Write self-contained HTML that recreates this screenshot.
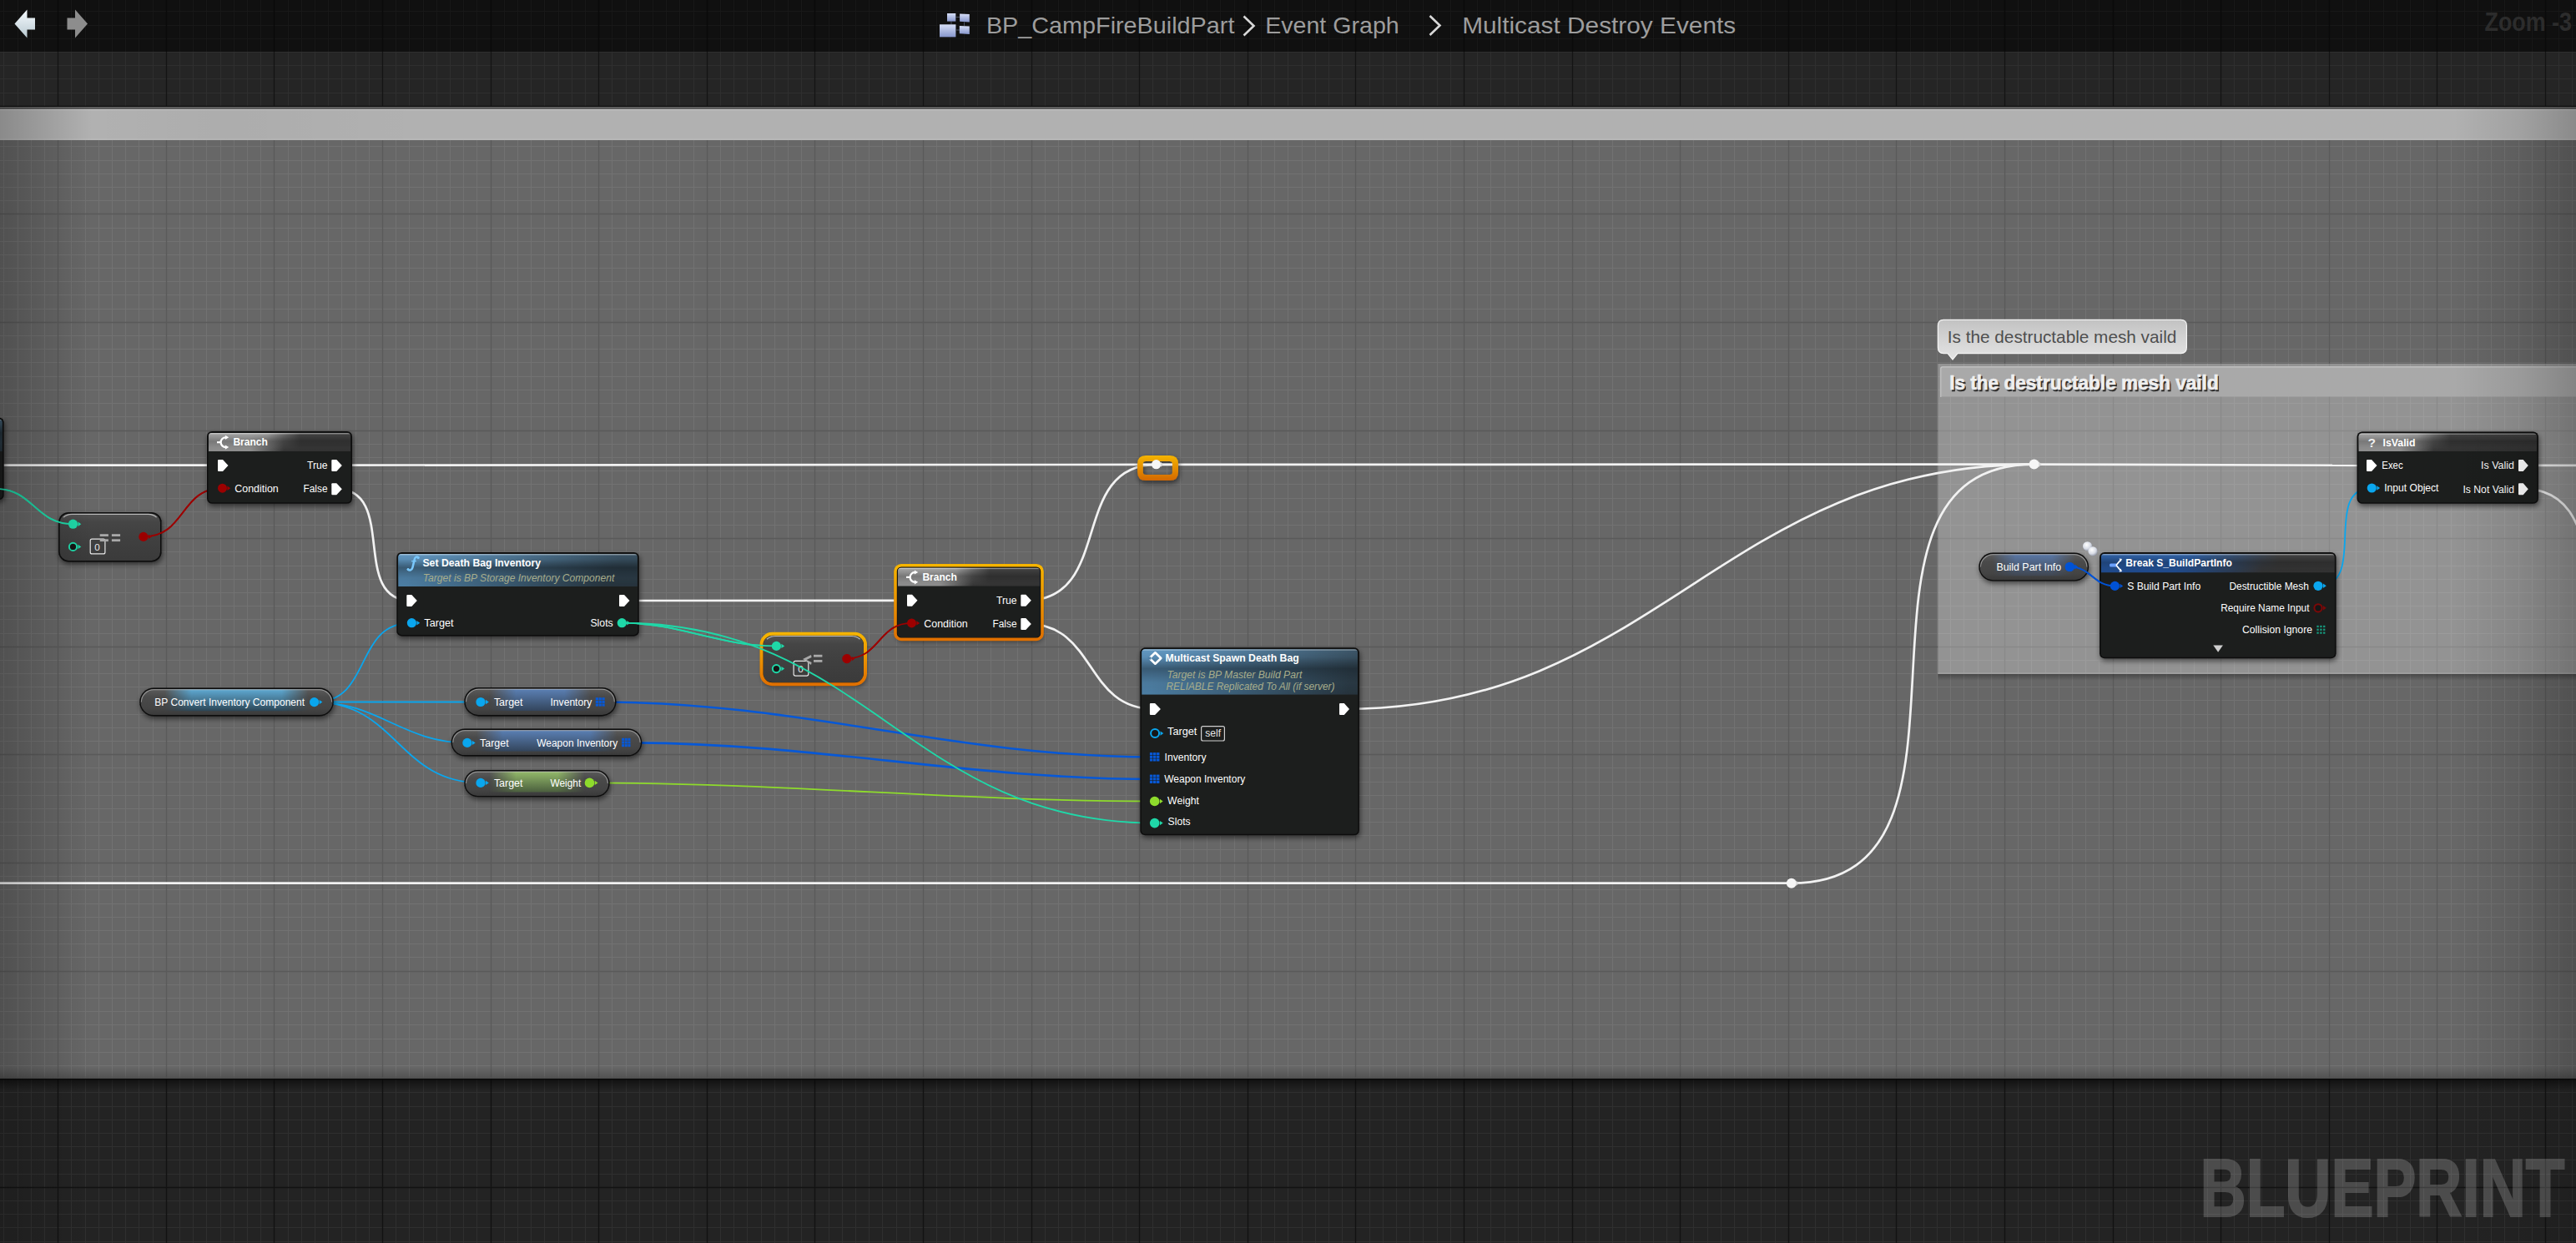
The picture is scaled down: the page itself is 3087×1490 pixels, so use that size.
<!DOCTYPE html>
<html><head><meta charset="utf-8"><title>Blueprint</title>
<style>html,body{margin:0;padding:0;background:#101010;overflow:hidden;width:3087px;height:1490px}svg{display:block}text{font-family:"Liberation Sans",sans-serif}</style>
</head><body><svg width="3087" height="1490" viewBox="0 0 3087 1490" font-family='"Liberation Sans", sans-serif'><defs><linearGradient id="barL" x1="0" y1="0" x2="1" y2="0"><stop offset="0" stop-color="#000" stop-opacity="0.0"/><stop offset="0.4" stop-color="#000" stop-opacity="0.025"/><stop offset="1" stop-color="#000" stop-opacity="0"/></linearGradient><linearGradient id="shTop" x1="0" y1="0" x2="0" y2="1"><stop offset="0" stop-color="#000" stop-opacity="0.55"/><stop offset="1" stop-color="#000" stop-opacity="0"/></linearGradient><linearGradient id="shBot" x1="0" y1="1" x2="0" y2="0"><stop offset="0" stop-color="#000" stop-opacity="0.35"/><stop offset="1" stop-color="#000" stop-opacity="0"/></linearGradient><linearGradient id="cmtHdr" x1="0" y1="0" x2="1" y2="0"><stop offset="0" stop-color="#a9a9a9"/><stop offset="1" stop-color="#a3a3a3"/></linearGradient><linearGradient id="bub" x1="0" y1="0" x2="0" y2="1"><stop offset="0" stop-color="#c2c2c2"/><stop offset="0.5" stop-color="#d4d4d4"/><stop offset="1" stop-color="#e4e4e4"/></linearGradient><linearGradient id="vigL" x1="0" y1="0" x2="1" y2="0"><stop offset="0" stop-color="#000" stop-opacity="0.22"/><stop offset="1" stop-color="#000" stop-opacity="0"/></linearGradient><linearGradient id="vigR" x1="1" y1="0" x2="0" y2="0"><stop offset="0" stop-color="#000" stop-opacity="0.22"/><stop offset="0.45" stop-color="#000" stop-opacity="0.09"/><stop offset="1" stop-color="#000" stop-opacity="0"/></linearGradient><filter id="nshadow" x="-10%" y="-20%" width="125%" height="150%"><feGaussianBlur in="SourceAlpha" stdDeviation="3"/><feOffset dx="1" dy="3"/><feComponentTransfer><feFuncA type="linear" slope="0.55"/></feComponentTransfer><feMerge><feMergeNode/><feMergeNode in="SourceGraphic"/></feMerge></filter><linearGradient id="hdrGray" x1="0" y1="0" x2="1" y2="0.25"><stop offset="0" stop-color="#9c9c9c"/><stop offset="0.28" stop-color="#8a8a8a"/><stop offset="0.52" stop-color="#404040"/><stop offset="1" stop-color="#2f2f2f"/></linearGradient><linearGradient id="hdrShade" x1="0" y1="0" x2="0" y2="1"><stop offset="0" stop-color="#fff" stop-opacity="0.18"/><stop offset="0.5" stop-color="#fff" stop-opacity="0"/><stop offset="1" stop-color="#000" stop-opacity="0.15"/></linearGradient><linearGradient id="hdrBlue" x1="0" y1="0" x2="1" y2="0.35"><stop offset="0" stop-color="#5a8db6"/><stop offset="0.45" stop-color="#40667f"/><stop offset="1" stop-color="#1f2a33"/></linearGradient><linearGradient id="hdrBlueV" x1="0" y1="0" x2="0" y2="1"><stop offset="0" stop-color="#000" stop-opacity="0"/><stop offset="0.55" stop-color="#000" stop-opacity="0.28"/><stop offset="1" stop-color="#000" stop-opacity="0"/></linearGradient><linearGradient id="hdrStruct" x1="0" y1="0" x2="1" y2="0.2"><stop offset="0" stop-color="#3565a8"/><stop offset="0.5" stop-color="#23497e"/><stop offset="1" stop-color="#2c3646"/></linearGradient><linearGradient id="selG" x1="0" y1="0" x2="0" y2="1"><stop offset="0" stop-color="#f6b400"/><stop offset="1" stop-color="#e07000"/></linearGradient><linearGradient id="hdrBand" x1="0" y1="0" x2="0" y2="1"><stop offset="0" stop-color="#000" stop-opacity="0"/><stop offset="0.22" stop-color="#000" stop-opacity="0.05"/><stop offset="0.5" stop-color="#000" stop-opacity="0.22"/><stop offset="0.8" stop-color="#000" stop-opacity="0.06"/><stop offset="1" stop-color="#000" stop-opacity="0"/></linearGradient><linearGradient id="hdrBandB" x1="0" y1="0" x2="0" y2="1"><stop offset="0" stop-color="#000" stop-opacity="0"/><stop offset="0.2" stop-color="#000" stop-opacity="0.05"/><stop offset="0.45" stop-color="#000" stop-opacity="0.36"/><stop offset="0.75" stop-color="#000" stop-opacity="0.08"/><stop offset="1" stop-color="#000" stop-opacity="0"/></linearGradient><linearGradient id="bodyG" x1="0" y1="0" x2="0" y2="1"><stop offset="0" stop-color="#1d1f1e"/><stop offset="1" stop-color="#202221"/></linearGradient><clipPath id="hc60_-120"><rect x="-118.0" y="502.5" width="120.7" height="38.7" rx="4"/><rect x="-118.0" y="506.5" width="120.7" height="34.7"/></clipPath><linearGradient id="hgT60_-120" gradientUnits="userSpaceOnUse" x1="-90.0" y1="0" x2="14.7" y2="0"><stop offset="0" stop-color="#649ac4"/><stop offset="1" stop-color="#3d5668"/></linearGradient><linearGradient id="hgB60_-120" gradientUnits="userSpaceOnUse" x1="-110.0" y1="0" x2="-5.3" y2="0"><stop offset="0" stop-color="#4b7da2"/><stop offset="1" stop-color="#26333c"/></linearGradient><linearGradient id="hm60_-120" x1="0" y1="0" x2="0" y2="1"><stop offset="0" stop-color="#fff"/><stop offset="0.5" stop-color="#fff" stop-opacity="0.5"/><stop offset="1" stop-color="#fff" stop-opacity="0"/></linearGradient><mask id="hm60_-120m" maskUnits="userSpaceOnUse" x="-120" y="500.5" width="124.7" height="40.700000000000045"><rect x="-120" y="500.5" width="124.7" height="40.700000000000045" fill="url(#hm60_-120)"/></mask><linearGradient id="cmpG" x1="0" y1="0" x2="0" y2="1"><stop offset="0" stop-color="#555"/><stop offset="0.18" stop-color="#474747"/><stop offset="0.5" stop-color="#424242"/><stop offset="1" stop-color="#3c3c3c"/></linearGradient><clipPath id="hc65_248"><rect x="250.0" y="519.1" width="170.0" height="21.9" rx="4"/><rect x="250.0" y="523.1" width="170.0" height="17.9"/></clipPath><linearGradient id="hgT65_248" gradientUnits="userSpaceOnUse" x1="320.0" y1="0" x2="360.0" y2="0"><stop offset="0" stop-color="#a6a6a6"/><stop offset="1" stop-color="#444444"/></linearGradient><linearGradient id="hgB65_248" gradientUnits="userSpaceOnUse" x1="300.0" y1="0" x2="340.0" y2="0"><stop offset="0" stop-color="#8e8e8e"/><stop offset="1" stop-color="#343434"/></linearGradient><linearGradient id="hm65_248" x1="0" y1="0" x2="0" y2="1"><stop offset="0" stop-color="#fff"/><stop offset="0.5" stop-color="#fff" stop-opacity="0.5"/><stop offset="1" stop-color="#fff" stop-opacity="0"/></linearGradient><mask id="hm65_248m" maskUnits="userSpaceOnUse" x="248" y="517.1" width="174" height="23.899999999999977"><rect x="248" y="517.1" width="174" height="23.899999999999977" fill="url(#hm65_248)"/></mask><clipPath id="hc66_475"><rect x="477.3" y="664.1" width="286.5" height="39.0" rx="4"/><rect x="477.3" y="668.1" width="286.5" height="35.0"/></clipPath><linearGradient id="hgT66_475" gradientUnits="userSpaceOnUse" x1="505.3" y1="0" x2="745.3" y2="0"><stop offset="0" stop-color="#649ac4"/><stop offset="1" stop-color="#3d5668"/></linearGradient><linearGradient id="hgB66_475" gradientUnits="userSpaceOnUse" x1="485.3" y1="0" x2="725.3" y2="0"><stop offset="0" stop-color="#4b7da2"/><stop offset="1" stop-color="#26333c"/></linearGradient><linearGradient id="hm66_475" x1="0" y1="0" x2="0" y2="1"><stop offset="0" stop-color="#fff"/><stop offset="0.5" stop-color="#fff" stop-opacity="0.5"/><stop offset="1" stop-color="#fff" stop-opacity="0"/></linearGradient><mask id="hm66_475m" maskUnits="userSpaceOnUse" x="475.3" y="662.1" width="290.49999999999994" height="41.0"><rect x="475.3" y="662.1" width="290.49999999999994" height="41.0" fill="url(#hm66_475)"/></mask><clipPath id="hc76_1074"><rect x="1076.0" y="680.8" width="170.0" height="21.9" rx="4"/><rect x="1076.0" y="684.8" width="170.0" height="17.9"/></clipPath><linearGradient id="hgT76_1074" gradientUnits="userSpaceOnUse" x1="1146.0" y1="0" x2="1186.0" y2="0"><stop offset="0" stop-color="#a6a6a6"/><stop offset="1" stop-color="#444444"/></linearGradient><linearGradient id="hgB76_1074" gradientUnits="userSpaceOnUse" x1="1126.0" y1="0" x2="1166.0" y2="0"><stop offset="0" stop-color="#8e8e8e"/><stop offset="1" stop-color="#343434"/></linearGradient><linearGradient id="hm76_1074" x1="0" y1="0" x2="0" y2="1"><stop offset="0" stop-color="#fff"/><stop offset="0.5" stop-color="#fff" stop-opacity="0.5"/><stop offset="1" stop-color="#fff" stop-opacity="0"/></linearGradient><mask id="hm76_1074m" maskUnits="userSpaceOnUse" x="1074" y="678.8" width="174" height="23.90000000000009"><rect x="1074" y="678.8" width="174" height="23.90000000000009" fill="url(#hm76_1074)"/></mask><clipPath id="hc82_1366"><rect x="1368.3" y="778.3" width="258.6" height="54.5" rx="4"/><rect x="1368.3" y="782.3" width="258.6" height="50.5"/></clipPath><linearGradient id="hgT82_1366" gradientUnits="userSpaceOnUse" x1="1396.3" y1="0" x2="1636.3" y2="0"><stop offset="0" stop-color="#649ac4"/><stop offset="1" stop-color="#3d5668"/></linearGradient><linearGradient id="hgB82_1366" gradientUnits="userSpaceOnUse" x1="1376.3" y1="0" x2="1616.3" y2="0"><stop offset="0" stop-color="#4b7da2"/><stop offset="1" stop-color="#26333c"/></linearGradient><linearGradient id="hm82_1366" x1="0" y1="0" x2="0" y2="1"><stop offset="0" stop-color="#fff"/><stop offset="0.5" stop-color="#fff" stop-opacity="0.5"/><stop offset="1" stop-color="#fff" stop-opacity="0"/></linearGradient><mask id="hm82_1366m" maskUnits="userSpaceOnUse" x="1366.3" y="776.3" width="262.60000000000014" height="56.5"><rect x="1366.3" y="776.3" width="262.60000000000014" height="56.5" fill="url(#hm82_1366)"/></mask><linearGradient id="pg102_167v" x1="0" y1="0" x2="0" y2="1"><stop offset="0" stop-color="#5fa9d2"/><stop offset="1" stop-color="#2c4656"/></linearGradient><linearGradient id="pg102_167h" x1="0" y1="0" x2="1" y2="0"><stop offset="0" stop-color="#fff" stop-opacity="0"/><stop offset="0.129" stop-color="#fff" stop-opacity="0"/><stop offset="0.267" stop-color="#fff" stop-opacity="1"/><stop offset="0.733" stop-color="#fff" stop-opacity="1"/><stop offset="0.871" stop-color="#fff" stop-opacity="0"/><stop offset="1" stop-color="#fff" stop-opacity="0"/></linearGradient><mask id="pg102_167m" maskUnits="userSpaceOnUse" x="167.2" y="824.5" width="232.60000000000002" height="34.0"><rect x="167.2" y="824.5" width="232.60000000000002" height="34.0" fill="url(#pg102_167h)"/></mask><linearGradient id="pillBase" x1="0" y1="0" x2="0" y2="1"><stop offset="0" stop-color="#5c5c5c"/><stop offset="0.3" stop-color="#4a4a4a"/><stop offset="0.75" stop-color="#444"/><stop offset="1" stop-color="#3a3a3a"/></linearGradient><linearGradient id="pg105_556v" x1="0" y1="0" x2="0" y2="1"><stop offset="0" stop-color="#5b80b4"/><stop offset="1" stop-color="#33455c"/></linearGradient><linearGradient id="pg105_556h" x1="0" y1="0" x2="1" y2="0"><stop offset="0" stop-color="#fff" stop-opacity="0"/><stop offset="0.165" stop-color="#fff" stop-opacity="0"/><stop offset="0.340" stop-color="#fff" stop-opacity="1"/><stop offset="0.660" stop-color="#fff" stop-opacity="1"/><stop offset="0.835" stop-color="#fff" stop-opacity="0"/><stop offset="1" stop-color="#fff" stop-opacity="0"/></linearGradient><mask id="pg105_556m" maskUnits="userSpaceOnUse" x="556.3" y="824.0" width="182.20000000000005" height="34.39999999999998"><rect x="556.3" y="824.0" width="182.20000000000005" height="34.39999999999998" fill="url(#pg105_556h)"/></mask><linearGradient id="pg110_540v" x1="0" y1="0" x2="0" y2="1"><stop offset="0" stop-color="#5b80b4"/><stop offset="1" stop-color="#33455c"/></linearGradient><linearGradient id="pg110_540h" x1="0" y1="0" x2="1" y2="0"><stop offset="0" stop-color="#fff" stop-opacity="0"/><stop offset="0.131" stop-color="#fff" stop-opacity="0"/><stop offset="0.271" stop-color="#fff" stop-opacity="1"/><stop offset="0.729" stop-color="#fff" stop-opacity="1"/><stop offset="0.869" stop-color="#fff" stop-opacity="0"/><stop offset="1" stop-color="#fff" stop-opacity="0"/></linearGradient><mask id="pg110_540m" maskUnits="userSpaceOnUse" x="540.6" y="873.5" width="228.69999999999993" height="33.0"><rect x="540.6" y="873.5" width="228.69999999999993" height="33.0" fill="url(#pg110_540h)"/></mask><linearGradient id="pg115_556v" x1="0" y1="0" x2="0" y2="1"><stop offset="0" stop-color="#93b96a"/><stop offset="1" stop-color="#4b5f3e"/></linearGradient><linearGradient id="pg115_556h" x1="0" y1="0" x2="1" y2="0"><stop offset="0" stop-color="#fff" stop-opacity="0"/><stop offset="0.172" stop-color="#fff" stop-opacity="0"/><stop offset="0.356" stop-color="#fff" stop-opacity="1"/><stop offset="0.644" stop-color="#fff" stop-opacity="1"/><stop offset="0.828" stop-color="#fff" stop-opacity="0"/><stop offset="1" stop-color="#fff" stop-opacity="0"/></linearGradient><mask id="pg115_556m" maskUnits="userSpaceOnUse" x="556.3" y="923.0" width="174.30000000000007" height="32.299999999999955"><rect x="556.3" y="923.0" width="174.30000000000007" height="32.299999999999955" fill="url(#pg115_556h)"/></mask><linearGradient id="selK" x1="0" y1="0" x2="0" y2="1"><stop offset="0" stop-color="#f4b400"/><stop offset="1" stop-color="#d46800"/></linearGradient><linearGradient id="pg126_2371v" x1="0" y1="0" x2="0" y2="1"><stop offset="0" stop-color="#5a78a6"/><stop offset="1" stop-color="#404650"/></linearGradient><linearGradient id="pg126_2371h" x1="0" y1="0" x2="1" y2="0"><stop offset="0" stop-color="#fff" stop-opacity="0"/><stop offset="0.121" stop-color="#fff" stop-opacity="0"/><stop offset="0.334" stop-color="#fff" stop-opacity="1"/><stop offset="0.666" stop-color="#fff" stop-opacity="1"/><stop offset="0.879" stop-color="#fff" stop-opacity="0"/><stop offset="1" stop-color="#fff" stop-opacity="0"/></linearGradient><mask id="pg126_2371m" maskUnits="userSpaceOnUse" x="2371.3" y="662.5" width="131.79999999999973" height="34.10000000000002"><rect x="2371.3" y="662.5" width="131.79999999999973" height="34.10000000000002" fill="url(#pg126_2371h)"/></mask><radialGradient id="sph" cx="0.4" cy="0.35" r="0.7"><stop offset="0" stop-color="#ffffff"/><stop offset="0.6" stop-color="#d8dce6"/><stop offset="1" stop-color="#8a90a0"/></radialGradient><clipPath id="hc130_2516"><rect x="2518.0" y="664.1" width="279.5" height="22.4" rx="4"/><rect x="2518.0" y="668.1" width="279.5" height="18.4"/></clipPath><linearGradient id="hgT130_2516" gradientUnits="userSpaceOnUse" x1="2626.0" y1="0" x2="2731.0" y2="0"><stop offset="0" stop-color="#3366aa"/><stop offset="1" stop-color="#444444"/></linearGradient><linearGradient id="hgB130_2516" gradientUnits="userSpaceOnUse" x1="2606.0" y1="0" x2="2711.0" y2="0"><stop offset="0" stop-color="#1f4a8c"/><stop offset="1" stop-color="#323232"/></linearGradient><linearGradient id="hm130_2516" x1="0" y1="0" x2="0" y2="1"><stop offset="0" stop-color="#fff"/><stop offset="0.5" stop-color="#fff" stop-opacity="0.5"/><stop offset="1" stop-color="#fff" stop-opacity="0"/></linearGradient><mask id="hm130_2516m" maskUnits="userSpaceOnUse" x="2516.0" y="662.1" width="283.5" height="24.399999999999977"><rect x="2516.0" y="662.1" width="283.5" height="24.399999999999977" fill="url(#hm130_2516)"/></mask><clipPath id="hc144_2824"><rect x="2826.6" y="519.4" width="213.3" height="21.6" rx="4"/><rect x="2826.6" y="523.4" width="213.3" height="17.6"/></clipPath><linearGradient id="hgT144_2824" gradientUnits="userSpaceOnUse" x1="2896.6" y1="0" x2="2936.6" y2="0"><stop offset="0" stop-color="#a6a6a6"/><stop offset="1" stop-color="#444444"/></linearGradient><linearGradient id="hgB144_2824" gradientUnits="userSpaceOnUse" x1="2876.6" y1="0" x2="2916.6" y2="0"><stop offset="0" stop-color="#8e8e8e"/><stop offset="1" stop-color="#343434"/></linearGradient><linearGradient id="hm144_2824" x1="0" y1="0" x2="0" y2="1"><stop offset="0" stop-color="#fff"/><stop offset="0.5" stop-color="#fff" stop-opacity="0.5"/><stop offset="1" stop-color="#fff" stop-opacity="0"/></linearGradient><mask id="hm144_2824m" maskUnits="userSpaceOnUse" x="2824.6" y="517.4" width="217.30000000000018" height="23.600000000000023"><rect x="2824.6" y="517.4" width="217.30000000000018" height="23.600000000000023" fill="url(#hm144_2824)"/></mask><linearGradient id="arrG" x1="0" y1="0" x2="0" y2="1"><stop offset="0" stop-color="#f6fbff"/><stop offset="1" stop-color="#b8c8d0"/></linearGradient><linearGradient id="icoG" x1="0" y1="0" x2="0" y2="1"><stop offset="0" stop-color="#d6def6"/><stop offset="1" stop-color="#8796cc"/></linearGradient></defs><g id="bg"><rect x="0" y="0" width="3087" height="62" fill="#101010"/><path d="M4.50,0V62M21.50,0V62M37.50,0V62M53.50,0V62M85.50,0V62M102.50,0V62M118.50,0V62M134.50,0V62M150.50,0V62M166.50,0V62M183.50,0V62M215.50,0V62M231.50,0V62M247.50,0V62M264.50,0V62M280.50,0V62M296.50,0V62M312.50,0V62M345.50,0V62M361.50,0V62M377.50,0V62M393.50,0V62M409.50,0V62M426.50,0V62M442.50,0V62M474.50,0V62M490.50,0V62M507.50,0V62M523.50,0V62M539.50,0V62M555.50,0V62M571.50,0V62M604.50,0V62M620.50,0V62M636.50,0V62M652.50,0V62M669.50,0V62M685.50,0V62M701.50,0V62M733.50,0V62M750.50,0V62M766.50,0V62M782.50,0V62M798.50,0V62M814.50,0V62M831.50,0V62M863.50,0V62M879.50,0V62M895.50,0V62M912.50,0V62M928.50,0V62M944.50,0V62M960.50,0V62M993.50,0V62M1009.50,0V62M1025.50,0V62M1041.50,0V62M1057.50,0V62M1074.50,0V62M1090.50,0V62M1122.50,0V62M1138.50,0V62M1155.50,0V62M1171.50,0V62M1187.50,0V62M1203.50,0V62M1219.50,0V62M1252.50,0V62M1268.50,0V62M1284.50,0V62M1300.50,0V62M1317.50,0V62M1333.50,0V62M1349.50,0V62M1381.50,0V62M1398.50,0V62M1414.50,0V62M1430.50,0V62M1446.50,0V62M1462.50,0V62M1479.50,0V62M1511.50,0V62M1527.50,0V62M1543.50,0V62M1560.50,0V62M1576.50,0V62M1592.50,0V62M1608.50,0V62M1641.50,0V62M1657.50,0V62M1673.50,0V62M1689.50,0V62M1705.50,0V62M1722.50,0V62M1738.50,0V62M1770.50,0V62M1786.50,0V62M1803.50,0V62M1819.50,0V62M1835.50,0V62M1851.50,0V62M1867.50,0V62M1900.50,0V62M1916.50,0V62M1932.50,0V62M1948.50,0V62M1965.50,0V62M1981.50,0V62M1997.50,0V62M2029.50,0V62M2046.50,0V62M2062.50,0V62M2078.50,0V62M2094.50,0V62M2110.50,0V62M2127.50,0V62M2159.50,0V62M2175.50,0V62M2191.50,0V62M2208.50,0V62M2224.50,0V62M2240.50,0V62M2256.50,0V62M2289.50,0V62M2305.50,0V62M2321.50,0V62M2337.50,0V62M2353.50,0V62M2370.50,0V62M2386.50,0V62M2418.50,0V62M2434.50,0V62M2451.50,0V62M2467.50,0V62M2483.50,0V62M2499.50,0V62M2515.50,0V62M2548.50,0V62M2564.50,0V62M2580.50,0V62M2596.50,0V62M2613.50,0V62M2629.50,0V62M2645.50,0V62M2677.50,0V62M2694.50,0V62M2710.50,0V62M2726.50,0V62M2742.50,0V62M2758.50,0V62M2775.50,0V62M2807.50,0V62M2823.50,0V62M2839.50,0V62M2856.50,0V62M2872.50,0V62M2888.50,0V62M2904.50,0V62M2937.50,0V62M2953.50,0V62M2969.50,0V62M2985.50,0V62M3001.50,0V62M3018.50,0V62M3034.50,0V62M3066.50,0V62M3082.50,0V62M0,13.50H3087M0,30.50H3087M0,46.50H3087M0,62.50H3087" stroke="#181818" stroke-width="1.15" fill="none"/><path d="M69.50,0V62M199.50,0V62M328.50,0V62M458.50,0V62M588.50,0V62M717.50,0V62M847.50,0V62M976.50,0V62M1106.50,0V62M1236.50,0V62M1365.50,0V62M1495.50,0V62M1624.50,0V62M1754.50,0V62M1884.50,0V62M2013.50,0V62M2143.50,0V62M2272.50,0V62M2402.50,0V62M2532.50,0V62M2661.50,0V62M2791.50,0V62M2920.50,0V62M3050.50,0V62" stroke="#0a0a0a" stroke-width="1.3" fill="none"/><rect x="0" y="62" width="3087" height="65" fill="#252525"/><path d="M4.50,62V127M21.50,62V127M37.50,62V127M53.50,62V127M85.50,62V127M102.50,62V127M118.50,62V127M134.50,62V127M150.50,62V127M166.50,62V127M183.50,62V127M215.50,62V127M231.50,62V127M247.50,62V127M264.50,62V127M280.50,62V127M296.50,62V127M312.50,62V127M345.50,62V127M361.50,62V127M377.50,62V127M393.50,62V127M409.50,62V127M426.50,62V127M442.50,62V127M474.50,62V127M490.50,62V127M507.50,62V127M523.50,62V127M539.50,62V127M555.50,62V127M571.50,62V127M604.50,62V127M620.50,62V127M636.50,62V127M652.50,62V127M669.50,62V127M685.50,62V127M701.50,62V127M733.50,62V127M750.50,62V127M766.50,62V127M782.50,62V127M798.50,62V127M814.50,62V127M831.50,62V127M863.50,62V127M879.50,62V127M895.50,62V127M912.50,62V127M928.50,62V127M944.50,62V127M960.50,62V127M993.50,62V127M1009.50,62V127M1025.50,62V127M1041.50,62V127M1057.50,62V127M1074.50,62V127M1090.50,62V127M1122.50,62V127M1138.50,62V127M1155.50,62V127M1171.50,62V127M1187.50,62V127M1203.50,62V127M1219.50,62V127M1252.50,62V127M1268.50,62V127M1284.50,62V127M1300.50,62V127M1317.50,62V127M1333.50,62V127M1349.50,62V127M1381.50,62V127M1398.50,62V127M1414.50,62V127M1430.50,62V127M1446.50,62V127M1462.50,62V127M1479.50,62V127M1511.50,62V127M1527.50,62V127M1543.50,62V127M1560.50,62V127M1576.50,62V127M1592.50,62V127M1608.50,62V127M1641.50,62V127M1657.50,62V127M1673.50,62V127M1689.50,62V127M1705.50,62V127M1722.50,62V127M1738.50,62V127M1770.50,62V127M1786.50,62V127M1803.50,62V127M1819.50,62V127M1835.50,62V127M1851.50,62V127M1867.50,62V127M1900.50,62V127M1916.50,62V127M1932.50,62V127M1948.50,62V127M1965.50,62V127M1981.50,62V127M1997.50,62V127M2029.50,62V127M2046.50,62V127M2062.50,62V127M2078.50,62V127M2094.50,62V127M2110.50,62V127M2127.50,62V127M2159.50,62V127M2175.50,62V127M2191.50,62V127M2208.50,62V127M2224.50,62V127M2240.50,62V127M2256.50,62V127M2289.50,62V127M2305.50,62V127M2321.50,62V127M2337.50,62V127M2353.50,62V127M2370.50,62V127M2386.50,62V127M2418.50,62V127M2434.50,62V127M2451.50,62V127M2467.50,62V127M2483.50,62V127M2499.50,62V127M2515.50,62V127M2548.50,62V127M2564.50,62V127M2580.50,62V127M2596.50,62V127M2613.50,62V127M2629.50,62V127M2645.50,62V127M2677.50,62V127M2694.50,62V127M2710.50,62V127M2726.50,62V127M2742.50,62V127M2758.50,62V127M2775.50,62V127M2807.50,62V127M2823.50,62V127M2839.50,62V127M2856.50,62V127M2872.50,62V127M2888.50,62V127M2904.50,62V127M2937.50,62V127M2953.50,62V127M2969.50,62V127M2985.50,62V127M3001.50,62V127M3018.50,62V127M3034.50,62V127M3066.50,62V127M3082.50,62V127M0,62.50H3087M0,78.50H3087M0,94.50H3087M0,111.50H3087" stroke="#2f2f2f" stroke-width="1.15" fill="none"/><path d="M69.50,62V127M199.50,62V127M328.50,62V127M458.50,62V127M588.50,62V127M717.50,62V127M847.50,62V127M976.50,62V127M1106.50,62V127M1236.50,62V127M1365.50,62V127M1495.50,62V127M1624.50,62V127M1754.50,62V127M1884.50,62V127M2013.50,62V127M2143.50,62V127M2272.50,62V127M2402.50,62V127M2532.50,62V127M2661.50,62V127M2791.50,62V127M2920.50,62V127M3050.50,62V127M0,127.50H3087" stroke="#141414" stroke-width="1.3" fill="none"/><rect x="0" y="127" width="3087" height="1" fill="#111"/><rect x="0" y="128" width="3087" height="3" fill="#5e5e5e"/><rect x="0" y="131" width="3087" height="1" fill="#cacaca"/><rect x="0" y="132" width="3087" height="34" fill="#b1b1b1"/><rect x="0" y="166" width="3087" height="2" fill="#b6b6b6"/><rect x="110" y="131" width="400" height="37" fill="url(#barL)"/><rect x="0" y="168" width="3087" height="1125" fill="#676767"/><path d="M4.50,168V1293M21.50,168V1293M37.50,168V1293M53.50,168V1293M85.50,168V1293M102.50,168V1293M118.50,168V1293M134.50,168V1293M150.50,168V1293M166.50,168V1293M183.50,168V1293M215.50,168V1293M231.50,168V1293M247.50,168V1293M264.50,168V1293M280.50,168V1293M296.50,168V1293M312.50,168V1293M345.50,168V1293M361.50,168V1293M377.50,168V1293M393.50,168V1293M409.50,168V1293M426.50,168V1293M442.50,168V1293M474.50,168V1293M490.50,168V1293M507.50,168V1293M523.50,168V1293M539.50,168V1293M555.50,168V1293M571.50,168V1293M604.50,168V1293M620.50,168V1293M636.50,168V1293M652.50,168V1293M669.50,168V1293M685.50,168V1293M701.50,168V1293M733.50,168V1293M750.50,168V1293M766.50,168V1293M782.50,168V1293M798.50,168V1293M814.50,168V1293M831.50,168V1293M863.50,168V1293M879.50,168V1293M895.50,168V1293M912.50,168V1293M928.50,168V1293M944.50,168V1293M960.50,168V1293M993.50,168V1293M1009.50,168V1293M1025.50,168V1293M1041.50,168V1293M1057.50,168V1293M1074.50,168V1293M1090.50,168V1293M1122.50,168V1293M1138.50,168V1293M1155.50,168V1293M1171.50,168V1293M1187.50,168V1293M1203.50,168V1293M1219.50,168V1293M1252.50,168V1293M1268.50,168V1293M1284.50,168V1293M1300.50,168V1293M1317.50,168V1293M1333.50,168V1293M1349.50,168V1293M1381.50,168V1293M1398.50,168V1293M1414.50,168V1293M1430.50,168V1293M1446.50,168V1293M1462.50,168V1293M1479.50,168V1293M1511.50,168V1293M1527.50,168V1293M1543.50,168V1293M1560.50,168V1293M1576.50,168V1293M1592.50,168V1293M1608.50,168V1293M1641.50,168V1293M1657.50,168V1293M1673.50,168V1293M1689.50,168V1293M1705.50,168V1293M1722.50,168V1293M1738.50,168V1293M1770.50,168V1293M1786.50,168V1293M1803.50,168V1293M1819.50,168V1293M1835.50,168V1293M1851.50,168V1293M1867.50,168V1293M1900.50,168V1293M1916.50,168V1293M1932.50,168V1293M1948.50,168V1293M1965.50,168V1293M1981.50,168V1293M1997.50,168V1293M2029.50,168V1293M2046.50,168V1293M2062.50,168V1293M2078.50,168V1293M2094.50,168V1293M2110.50,168V1293M2127.50,168V1293M2159.50,168V1293M2175.50,168V1293M2191.50,168V1293M2208.50,168V1293M2224.50,168V1293M2240.50,168V1293M2256.50,168V1293M2289.50,168V1293M2305.50,168V1293M2321.50,168V1293M2337.50,168V1293M2353.50,168V1293M2370.50,168V1293M2386.50,168V1293M2418.50,168V1293M2434.50,168V1293M2451.50,168V1293M2467.50,168V1293M2483.50,168V1293M2499.50,168V1293M2515.50,168V1293M2548.50,168V1293M2564.50,168V1293M2580.50,168V1293M2596.50,168V1293M2613.50,168V1293M2629.50,168V1293M2645.50,168V1293M2677.50,168V1293M2694.50,168V1293M2710.50,168V1293M2726.50,168V1293M2742.50,168V1293M2758.50,168V1293M2775.50,168V1293M2807.50,168V1293M2823.50,168V1293M2839.50,168V1293M2856.50,168V1293M2872.50,168V1293M2888.50,168V1293M2904.50,168V1293M2937.50,168V1293M2953.50,168V1293M2969.50,168V1293M2985.50,168V1293M3001.50,168V1293M3018.50,168V1293M3034.50,168V1293M3066.50,168V1293M3082.50,168V1293M0,175.50H3087M0,192.50H3087M0,208.50H3087M0,224.50H3087M0,240.50H3087M0,273.50H3087M0,289.50H3087M0,305.50H3087M0,321.50H3087M0,337.50H3087M0,353.50H3087M0,370.50H3087M0,402.50H3087M0,418.50H3087M0,434.50H3087M0,451.50H3087M0,467.50H3087M0,483.50H3087M0,499.50H3087M0,532.50H3087M0,548.50H3087M0,564.50H3087M0,580.50H3087M0,597.50H3087M0,613.50H3087M0,629.50H3087M0,661.50H3087M0,678.50H3087M0,694.50H3087M0,710.50H3087M0,726.50H3087M0,742.50H3087M0,759.50H3087M0,791.50H3087M0,807.50H3087M0,823.50H3087M0,839.50H3087M0,856.50H3087M0,872.50H3087M0,888.50H3087M0,920.50H3087M0,937.50H3087M0,953.50H3087M0,969.50H3087M0,985.50H3087M0,1001.50H3087M0,1018.50H3087M0,1050.50H3087M0,1066.50H3087M0,1083.50H3087M0,1099.50H3087M0,1115.50H3087M0,1131.50H3087M0,1147.50H3087M0,1180.50H3087M0,1196.50H3087M0,1212.50H3087M0,1228.50H3087M0,1245.50H3087M0,1261.50H3087M0,1277.50H3087" stroke="#727272" stroke-width="1.15" fill="none"/><path d="M69.50,168V1293M199.50,168V1293M328.50,168V1293M458.50,168V1293M588.50,168V1293M717.50,168V1293M847.50,168V1293M976.50,168V1293M1106.50,168V1293M1236.50,168V1293M1365.50,168V1293M1495.50,168V1293M1624.50,168V1293M1754.50,168V1293M1884.50,168V1293M2013.50,168V1293M2143.50,168V1293M2272.50,168V1293M2402.50,168V1293M2532.50,168V1293M2661.50,168V1293M2791.50,168V1293M2920.50,168V1293M3050.50,168V1293M0,256.50H3087M0,386.50H3087M0,516.50H3087M0,645.50H3087M0,775.50H3087M0,904.50H3087M0,1034.50H3087M0,1164.50H3087M0,1293.50H3087" stroke="#5a5a5a" stroke-width="1.3" fill="none"/><rect x="0" y="1293" width="3087" height="197" fill="#232323"/><path d="M4.50,1293V1490M21.50,1293V1490M37.50,1293V1490M53.50,1293V1490M85.50,1293V1490M102.50,1293V1490M118.50,1293V1490M134.50,1293V1490M150.50,1293V1490M166.50,1293V1490M183.50,1293V1490M215.50,1293V1490M231.50,1293V1490M247.50,1293V1490M264.50,1293V1490M280.50,1293V1490M296.50,1293V1490M312.50,1293V1490M345.50,1293V1490M361.50,1293V1490M377.50,1293V1490M393.50,1293V1490M409.50,1293V1490M426.50,1293V1490M442.50,1293V1490M474.50,1293V1490M490.50,1293V1490M507.50,1293V1490M523.50,1293V1490M539.50,1293V1490M555.50,1293V1490M571.50,1293V1490M604.50,1293V1490M620.50,1293V1490M636.50,1293V1490M652.50,1293V1490M669.50,1293V1490M685.50,1293V1490M701.50,1293V1490M733.50,1293V1490M750.50,1293V1490M766.50,1293V1490M782.50,1293V1490M798.50,1293V1490M814.50,1293V1490M831.50,1293V1490M863.50,1293V1490M879.50,1293V1490M895.50,1293V1490M912.50,1293V1490M928.50,1293V1490M944.50,1293V1490M960.50,1293V1490M993.50,1293V1490M1009.50,1293V1490M1025.50,1293V1490M1041.50,1293V1490M1057.50,1293V1490M1074.50,1293V1490M1090.50,1293V1490M1122.50,1293V1490M1138.50,1293V1490M1155.50,1293V1490M1171.50,1293V1490M1187.50,1293V1490M1203.50,1293V1490M1219.50,1293V1490M1252.50,1293V1490M1268.50,1293V1490M1284.50,1293V1490M1300.50,1293V1490M1317.50,1293V1490M1333.50,1293V1490M1349.50,1293V1490M1381.50,1293V1490M1398.50,1293V1490M1414.50,1293V1490M1430.50,1293V1490M1446.50,1293V1490M1462.50,1293V1490M1479.50,1293V1490M1511.50,1293V1490M1527.50,1293V1490M1543.50,1293V1490M1560.50,1293V1490M1576.50,1293V1490M1592.50,1293V1490M1608.50,1293V1490M1641.50,1293V1490M1657.50,1293V1490M1673.50,1293V1490M1689.50,1293V1490M1705.50,1293V1490M1722.50,1293V1490M1738.50,1293V1490M1770.50,1293V1490M1786.50,1293V1490M1803.50,1293V1490M1819.50,1293V1490M1835.50,1293V1490M1851.50,1293V1490M1867.50,1293V1490M1900.50,1293V1490M1916.50,1293V1490M1932.50,1293V1490M1948.50,1293V1490M1965.50,1293V1490M1981.50,1293V1490M1997.50,1293V1490M2029.50,1293V1490M2046.50,1293V1490M2062.50,1293V1490M2078.50,1293V1490M2094.50,1293V1490M2110.50,1293V1490M2127.50,1293V1490M2159.50,1293V1490M2175.50,1293V1490M2191.50,1293V1490M2208.50,1293V1490M2224.50,1293V1490M2240.50,1293V1490M2256.50,1293V1490M2289.50,1293V1490M2305.50,1293V1490M2321.50,1293V1490M2337.50,1293V1490M2353.50,1293V1490M2370.50,1293V1490M2386.50,1293V1490M2418.50,1293V1490M2434.50,1293V1490M2451.50,1293V1490M2467.50,1293V1490M2483.50,1293V1490M2499.50,1293V1490M2515.50,1293V1490M2548.50,1293V1490M2564.50,1293V1490M2580.50,1293V1490M2596.50,1293V1490M2613.50,1293V1490M2629.50,1293V1490M2645.50,1293V1490M2677.50,1293V1490M2694.50,1293V1490M2710.50,1293V1490M2726.50,1293V1490M2742.50,1293V1490M2758.50,1293V1490M2775.50,1293V1490M2807.50,1293V1490M2823.50,1293V1490M2839.50,1293V1490M2856.50,1293V1490M2872.50,1293V1490M2888.50,1293V1490M2904.50,1293V1490M2937.50,1293V1490M2953.50,1293V1490M2969.50,1293V1490M2985.50,1293V1490M3001.50,1293V1490M3018.50,1293V1490M3034.50,1293V1490M3066.50,1293V1490M3082.50,1293V1490M0,1309.50H3087M0,1326.50H3087M0,1342.50H3087M0,1358.50H3087M0,1374.50H3087M0,1390.50H3087M0,1407.50H3087M0,1439.50H3087M0,1455.50H3087M0,1471.50H3087M0,1488.50H3087" stroke="#2f2f2f" stroke-width="1.15" fill="none"/><path d="M69.50,1293V1490M199.50,1293V1490M328.50,1293V1490M458.50,1293V1490M588.50,1293V1490M717.50,1293V1490M847.50,1293V1490M976.50,1293V1490M1106.50,1293V1490M1236.50,1293V1490M1365.50,1293V1490M1495.50,1293V1490M1624.50,1293V1490M1754.50,1293V1490M1884.50,1293V1490M2013.50,1293V1490M2143.50,1293V1490M2272.50,1293V1490M2402.50,1293V1490M2532.50,1293V1490M2661.50,1293V1490M2791.50,1293V1490M2920.50,1293V1490M3050.50,1293V1490M0,1293.50H3087M0,1423.50H3087" stroke="#121212" stroke-width="1.3" fill="none"/></g><rect x="0" y="1293" width="3087" height="14" fill="url(#shTop)"/><rect x="0" y="1279" width="3087" height="14" fill="url(#shBot)" opacity="0.6"/><rect x="0" y="1290.5" width="3087" height="2.5" fill="#555" opacity="0.6"/><g id="comment"><rect x="2322.4" y="436.0" width="774.5999999999999" height="372.0" fill="#ffffff" fill-opacity="0.29"/><path d="M2325.2,478 V441.8 Q2325.2,439.2 2327.8,439.2 H3100 V475.4 H2325.2 Z" fill="#a9a9a9"/><path d="M2325.8,476 V442 Q2325.8,439.8 2328,439.8 H3100" stroke="#c4c4c4" stroke-width="1.2" fill="none"/><rect x="2322.4" y="806.3" width="774.5999999999999" height="1.2" fill="#a2a2a2"/><rect x="2322.4" y="808.0" width="774.5999999999999" height="8" fill="url(#shTop)" opacity="0.55"/></g><path d="M2329,383.4 H2613.4 Q2620.4,383.4 2620.4,390.4 V416.6 Q2620.4,423.6 2613.4,423.6 H2346 L2340,431 L2334,423.6 H2329 Q2322.4,423.6 2322.4,416.6 V390.4 Q2322.4,383.4 2329,383.4 Z" fill="url(#bub)" stroke="#f4f4f4" stroke-width="1.2"/><text x="2333.8" y="410.5" font-size="21" font-weight="normal" font-style="normal" fill="#4e4e4e" textLength="274.5" lengthAdjust="spacingAndGlyphs" >Is the destructable mesh vaild</text><text x="2337.8" y="468.6" font-size="23" font-weight="bold" font-style="normal" fill="#1c1c1c" textLength="322.5" lengthAdjust="spacingAndGlyphs" stroke="#1c1c1c" stroke-width="0.7" opacity="0.9">Is the destructable mesh vaild</text><text x="2336.2" y="467.0" font-size="23" font-weight="bold" font-style="normal" fill="#efefef" textLength="322.5" lengthAdjust="spacingAndGlyphs" stroke="#efefef" stroke-width="0.7">Is the destructable mesh vaild</text><path d="M-10.0,557.6 L262.0,557.6" stroke="#f2f2f2" stroke-width="2.7" fill="none"/><path d="M403.0,557.6 L1386.0,556.9" stroke="#f2f2f2" stroke-width="2.7" fill="none"/><path d="M1386.0,556.9 L2437.6,556.6" stroke="#f2f2f2" stroke-width="2.7" fill="none"/><path d="M2437.6,556.6 L2842.0,557.9" stroke="#f2f2f2" stroke-width="2.7" fill="none"/><path d="M3024.0,557.9 L3100.0,557.9" stroke="#f2f2f2" stroke-width="2.7" fill="none"/><path d="M403.0,586.2 C477.6,586.2 418.4,720.0 493.0,720.0" stroke="#f2f2f2" stroke-width="2.7" fill="none"/><path d="M748.0,720.0 L1093.0,719.8" stroke="#f2f2f2" stroke-width="2.7" fill="none"/><path d="M1229.5,719.7 C1335.9,719.7 1279.6,556.9 1386.0,556.9" stroke="#f2f2f2" stroke-width="2.7" fill="none"/><path d="M1229.5,747.7 C1315.1,747.7 1298.4,850.0 1384.0,850.0" stroke="#f2f2f2" stroke-width="2.7" fill="none"/><path d="M1611.0,850.0 C1984.3,850.0 2064.3,556.6 2437.6,556.6" stroke="#f2f2f2" stroke-width="2.7" fill="none"/><path d="M-10.0,1058.7 L2146.8,1058.7" stroke="#f2f2f2" stroke-width="2.7" fill="none"/><path d="M2146.8,1058.7 C2411.1,1058.7 2173.3,556.6 2437.6,556.6" stroke="#f2f2f2" stroke-width="2.7" fill="none"/><path d="M3024.0,586.2 C3133.9,586.2 3070.1,760.0 3180.0,760.0" stroke="#f2f2f2" stroke-width="2.7" fill="none"/><path d="M-5.0,586.0 C39.9,586.0 42.6,628.2 87.5,628.2" stroke="#1fd8a8" stroke-width="1.8" fill="none" stroke-linecap="round"/><path d="M171.9,643.4 C222.8,643.4 215.6,585.2 266.5,585.2" stroke="#9c0000" stroke-width="1.8" fill="none" stroke-linecap="round"/><path d="M376.6,841.6 C447.2,841.6 422.8,746.7 493.4,746.7" stroke="#0aa6ee" stroke-width="1.8" fill="none" stroke-linecap="round"/><path d="M376.6,841.6 L576.0,841.5" stroke="#0aa6ee" stroke-width="2" fill="none"/><path d="M376.6,841.6 C454.0,841.6 482.5,890.4 559.9,890.4" stroke="#0aa6ee" stroke-width="1.8" fill="none" stroke-linecap="round"/><path d="M376.6,841.6 C475.3,841.6 477.3,938.4 576.0,938.4" stroke="#0aa6ee" stroke-width="1.8" fill="none" stroke-linecap="round"/><path d="M745.3,746.7 C816.2,746.7 859.5,774.4 930.4,774.4" stroke="#1fd8a8" stroke-width="1.8" fill="none" stroke-linecap="round"/><path d="M1014.4,789.3 C1054.6,789.3 1052.3,746.9 1092.5,746.9" stroke="#9c0000" stroke-width="1.8" fill="none" stroke-linecap="round"/><path d="M719.5,841.5 C963.0,841.5 1140.5,907.5 1384.0,907.5" stroke="#0758d6" stroke-width="2.6" fill="none" stroke-linecap="round"/><path d="M750.5,890.3 C976.2,890.3 1158.3,934.0 1384.0,934.0" stroke="#0758d6" stroke-width="2.6" fill="none" stroke-linecap="round"/><path d="M706.5,938.4 C939.6,938.4 1150.6,960.5 1383.7,960.5" stroke="#8edb2c" stroke-width="1.8" fill="none" stroke-linecap="round"/><path d="M2480.3,679.5 C2506.0,679.5 2508.7,702.4 2534.4,702.4" stroke="#0052d4" stroke-width="1.8" fill="none" stroke-linecap="round"/><path d="M2778.0,702.3 C2838.5,702.3 2781.8,585.0 2842.3,585.0" stroke="#0aa6ee" stroke-width="1.8" fill="none" stroke-linecap="round"/><g filter="url(#nshadow)"><rect x="-120.0" y="500.5" width="124.7" height="98.7" rx="6" fill="#0c0c0c"/></g><rect x="-118.5" y="502.0" width="121.7" height="95.7" rx="4.5" fill="#1e201f" fill-opacity="0.9"/><g clip-path="url(#hc60_-120)"><rect x="-120.0" y="500.5" width="124.7" height="40.7" fill="url(#hgB60_-120)"/><rect x="-120.0" y="500.5" width="124.7" height="40.7" fill="url(#hgT60_-120)" mask="url(#hm60_-120m)"/><rect x="-120.0" y="500.5" width="124.7" height="40.7" fill="url(#hdrBandB)"/><rect x="-120.0" y="502.5" width="124.7" height="1.3" fill="#fff" fill-opacity="0.42"/></g><g filter="url(#nshadow)"><rect x="70.1" y="614.1" width="123.5" height="59.4" rx="12" fill="#0d0d0d"/></g><rect x="71.7" y="615.7" width="120.3" height="56.2" rx="10.5" fill="url(#cmpG)" fill-opacity="0.97"/><path d="M76.1,620.1 Q80.1,616.3 86.1,616.3 H177.6 Q183.6,616.3 187.6,620.1" stroke="#d8d8d8" stroke-opacity="0.8" stroke-width="1.2" fill="none"/><circle cx="87.5" cy="628.2" r="5.6" fill="#1fd8a8"/><path d="M93.5,625.5 L97.3,628.2 L93.5,630.9 Z" fill="#1fd8a8"/><circle cx="87.5" cy="655.4" r="4.6" fill="#161616" stroke="#1fd8a8" stroke-width="2"/><path d="M93.5,652.7 L97.3,655.4 L93.5,658.1 Z" fill="#1fd8a8"/><rect x="108.2" y="646.2" width="17.7" height="17.7" rx="2" fill="none" stroke="#e6e6e6" stroke-width="1.2"/><text x="113.3" y="659.6" font-size="11.5" font-weight="normal" font-style="normal" fill="#e8e8e8" textLength="6.5" lengthAdjust="spacingAndGlyphs" >0</text><circle cx="171.9" cy="643.4" r="5.6" fill="#9c0000"/><path d="M177.9,640.7 L181.7,643.4 L177.9,646.1 Z" fill="#9c0000"/><path d="M-5.0,586.0 C39.9,586.0 42.6,628.2 87.5,628.2" stroke="#1fd8a8" stroke-width="1.8" fill="none" stroke-linecap="round"/><path d="M171.9,643.4 C222.8,643.4 215.6,585.2 266.5,585.2" stroke="#9c0000" stroke-width="1.8" fill="none" stroke-linecap="round"/><g fill="#a9a9a9"><rect x="119.7" y="640.2" width="10.2" height="2.8"/><rect x="133.9" y="640.2" width="10.2" height="2.8"/><rect x="119.7" y="646.3" width="10.2" height="2.8"/><rect x="133.9" y="646.3" width="10.2" height="2.8"/></g><g filter="url(#nshadow)"><rect x="248.0" y="517.1" width="174.0" height="86.6" rx="6" fill="#0c0c0c"/></g><rect x="249.5" y="518.6" width="171.0" height="83.6" rx="4.5" fill="#1e201f" fill-opacity="0.9"/><g clip-path="url(#hc65_248)"><rect x="248.0" y="517.1" width="174.0" height="23.9" fill="url(#hgB65_248)"/><rect x="248.0" y="517.1" width="174.0" height="23.9" fill="url(#hgT65_248)" mask="url(#hm65_248m)"/><rect x="248.0" y="517.1" width="174.0" height="23.9" fill="url(#hdrBand)"/><rect x="248.0" y="519.1" width="174.0" height="1.3" fill="#fff" fill-opacity="0.42"/></g><path d="M260.0,530.2 H264.0" stroke="#fff" stroke-width="2.2"/><path d="M270.5,524.3 A5.9,5.9 0 0 0 270.5,536.1" stroke="#fff" stroke-width="2.3" fill="none"/><path d="M269.9,521.7 L274.2,524.3 L269.9,526.9 Z" fill="#fff"/><path d="M269.9,533.5 L274.2,536.1 L269.9,538.7 Z" fill="#fff"/><text x="279.4" y="534.1" font-size="12.5" font-weight="bold" font-style="normal" fill="#fff" textLength="41.5" lengthAdjust="spacingAndGlyphs" >Branch</text><path d="M262.0,551.0 H267.0 L273.5,558.0 L267.0,565.0 H262.0 Q261.0,565.0 261.0,564.0 V552.0 Q261.0,551.0 262.0,551.0 Z" fill="#fff"/><path d="M398.3,551.0 H403.3 L409.8,558.0 L403.3,565.0 H398.3 Q397.3,565.0 397.3,564.0 V552.0 Q397.3,551.0 398.3,551.0 Z" fill="#fff"/><path d="M398.3,579.2 H403.3 L409.8,586.2 L403.3,593.2 H398.3 Q397.3,593.2 397.3,592.2 V580.2 Q397.3,579.2 398.3,579.2 Z" fill="#fff"/><text x="367.9" y="562.3" font-size="12.5" font-weight="normal" font-style="normal" fill="#fff" textLength="24.6" lengthAdjust="spacingAndGlyphs" >True</text><text x="281.3" y="590.0" font-size="12.5" font-weight="normal" font-style="normal" fill="#fff" textLength="52.5" lengthAdjust="spacingAndGlyphs" >Condition</text><text x="363.5" y="590.0" font-size="12.5" font-weight="normal" font-style="normal" fill="#fff" textLength="29.0" lengthAdjust="spacingAndGlyphs" >False</text><circle cx="266.5" cy="585.2" r="5.5" fill="#9c0000"/><path d="M272.4,582.5 L276.2,585.2 L272.4,587.9 Z" fill="#9c0000"/><g filter="url(#nshadow)"><rect x="475.3" y="662.1" width="290.5" height="100.3" rx="6" fill="#0c0c0c"/></g><rect x="476.8" y="663.6" width="287.5" height="97.3" rx="4.5" fill="#1e201f" fill-opacity="0.9"/><g clip-path="url(#hc66_475)"><rect x="475.3" y="662.1" width="290.5" height="41.0" fill="url(#hgB66_475)"/><rect x="475.3" y="662.1" width="290.5" height="41.0" fill="url(#hgT66_475)" mask="url(#hm66_475m)"/><rect x="475.3" y="662.1" width="290.5" height="41.0" fill="url(#hdrBandB)"/><rect x="475.3" y="664.1" width="290.5" height="1.3" fill="#fff" fill-opacity="0.42"/></g><path d="M501.3,668.4 C500,666.9 497.6,667.1 496.8,670.3 L494.4,680.4 C493.6,683.6 490.6,684.3 488.9,682.6" stroke="#7ac8fc" stroke-width="2.5" fill="none" stroke-linecap="round"/><path d="M493.1,672.6 H498.9" stroke="#7ac8fc" stroke-width="1.3"/><circle cx="501.1" cy="668.6" r="1.5" fill="#7ac8fc"/><circle cx="489.1" cy="682.4" r="1.5" fill="#7ac8fc"/><text x="506.4" y="679.0" font-size="12.5" font-weight="bold" font-style="normal" fill="#fff" textLength="141.8" lengthAdjust="spacingAndGlyphs" >Set Death Bag Inventory</text><text x="506.8" y="696.5" font-size="12" font-weight="normal" font-style="italic" fill="#a8ad8b" textLength="229.5" lengthAdjust="spacingAndGlyphs" >Target is BP Storage Inventory Component</text><path d="M488.3,713.1 H493.3 L499.8,720.1 L493.3,727.1 H488.3 Q487.3,727.1 487.3,726.1 V714.1 Q487.3,713.1 488.3,713.1 Z" fill="#fff"/><path d="M743.0,713.1 H748.0 L754.5,720.1 L748.0,727.1 H743.0 Q742.0,727.1 742.0,726.1 V714.1 Q742.0,713.1 743.0,713.1 Z" fill="#fff"/><circle cx="493.4" cy="746.7" r="5.6" fill="#0aa6ee"/><path d="M499.4,744.0 L503.2,746.7 L499.4,749.4 Z" fill="#0aa6ee"/><text x="508.3" y="750.8" font-size="12.5" font-weight="normal" font-style="normal" fill="#fff" textLength="35.3" lengthAdjust="spacingAndGlyphs" >Target</text><text x="707.4" y="750.8" font-size="12.5" font-weight="normal" font-style="normal" fill="#fff" textLength="27.3" lengthAdjust="spacingAndGlyphs" >Slots</text><circle cx="745.3" cy="746.7" r="5.6" fill="#1fd8a8"/><path d="M751.3,744.0 L755.1,746.7 L751.3,749.4 Z" fill="#1fd8a8"/><g filter="url(#nshadow)"><rect x="1074.0" y="678.8" width="174.0" height="86.6" rx="6" fill="#0c0c0c"/></g><rect x="1075.5" y="680.3" width="171.0" height="83.6" rx="4.5" fill="#1e201f" fill-opacity="0.9"/><g clip-path="url(#hc76_1074)"><rect x="1074.0" y="678.8" width="174.0" height="23.9" fill="url(#hgB76_1074)"/><rect x="1074.0" y="678.8" width="174.0" height="23.9" fill="url(#hgT76_1074)" mask="url(#hm76_1074m)"/><rect x="1074.0" y="678.8" width="174.0" height="23.9" fill="url(#hdrBand)"/><rect x="1074.0" y="680.8" width="174.0" height="1.3" fill="#fff" fill-opacity="0.42"/></g><rect x="1073.0" y="677.8" width="176.0" height="88.6" rx="7" fill="none" stroke="url(#selG)" stroke-width="3.6"/><path d="M1086.0,691.9 H1090.0" stroke="#fff" stroke-width="2.2"/><path d="M1096.5,686.0 A5.9,5.9 0 0 0 1096.5,697.8" stroke="#fff" stroke-width="2.3" fill="none"/><path d="M1095.9,683.4 L1100.2,686.0 L1095.9,688.6 Z" fill="#fff"/><path d="M1095.9,695.2 L1100.2,697.8 L1095.9,700.4 Z" fill="#fff"/><text x="1105.4" y="695.8" font-size="12.5" font-weight="bold" font-style="normal" fill="#fff" textLength="41.5" lengthAdjust="spacingAndGlyphs" >Branch</text><path d="M1088.0,712.7 H1093.0 L1099.5,719.7 L1093.0,726.7 H1088.0 Q1087.0,726.7 1087.0,725.7 V713.7 Q1087.0,712.7 1088.0,712.7 Z" fill="#fff"/><path d="M1224.3,712.7 H1229.3 L1235.8,719.7 L1229.3,726.7 H1224.3 Q1223.3,726.7 1223.3,725.7 V713.7 Q1223.3,712.7 1224.3,712.7 Z" fill="#fff"/><path d="M1224.3,740.9 H1229.3 L1235.8,747.9 L1229.3,754.9 H1224.3 Q1223.3,754.9 1223.3,753.9 V741.9 Q1223.3,740.9 1224.3,740.9 Z" fill="#fff"/><text x="1193.9" y="724.0" font-size="12.5" font-weight="normal" font-style="normal" fill="#fff" textLength="24.6" lengthAdjust="spacingAndGlyphs" >True</text><text x="1107.3" y="751.7" font-size="12.5" font-weight="normal" font-style="normal" fill="#fff" textLength="52.5" lengthAdjust="spacingAndGlyphs" >Condition</text><text x="1189.5" y="751.7" font-size="12.5" font-weight="normal" font-style="normal" fill="#fff" textLength="29.0" lengthAdjust="spacingAndGlyphs" >False</text><circle cx="1092.5" cy="746.9" r="5.5" fill="#9c0000"/><path d="M1098.4,744.2 L1102.2,746.9 L1098.4,749.6 Z" fill="#9c0000"/><g filter="url(#nshadow)"><rect x="913.0" y="760.3" width="123.5" height="59.4" rx="12" fill="#0d0d0d"/></g><rect x="914.6" y="761.9" width="120.3" height="56.2" rx="10.5" fill="url(#cmpG)" fill-opacity="0.97"/><path d="M919.0,766.3 Q923.0,762.5 929.0,762.5 H1020.5 Q1026.5,762.5 1030.5,766.3" stroke="#d8d8d8" stroke-opacity="0.8" stroke-width="1.2" fill="none"/><rect x="912.5" y="759.8" width="124.5" height="60.4" rx="13" fill="none" stroke="url(#selG)" stroke-width="4"/><circle cx="930.4" cy="774.4" r="5.6" fill="#1fd8a8"/><path d="M936.4,771.7 L940.2,774.4 L936.4,777.1 Z" fill="#1fd8a8"/><circle cx="930.4" cy="801.6" r="4.6" fill="#161616" stroke="#1fd8a8" stroke-width="2"/><path d="M936.4,798.9 L940.2,801.6 L936.4,804.3 Z" fill="#1fd8a8"/><rect x="951.1" y="792.4" width="17.7" height="17.7" rx="2" fill="none" stroke="#e6e6e6" stroke-width="1.2"/><text x="956.2" y="805.8" font-size="11.5" font-weight="normal" font-style="normal" fill="#e8e8e8" textLength="6.5" lengthAdjust="spacingAndGlyphs" >0</text><circle cx="1014.8" cy="789.6" r="5.6" fill="#9c0000"/><path d="M1020.8,786.9 L1024.6,789.6 L1020.8,792.3 Z" fill="#9c0000"/><path d="M745.3,746.7 C816.2,746.7 859.5,774.4 930.4,774.4" stroke="#1fd8a8" stroke-width="1.8" fill="none" stroke-linecap="round"/><path d="M1014.4,789.3 C1054.6,789.3 1052.3,746.9 1092.5,746.9" stroke="#9c0000" stroke-width="1.8" fill="none" stroke-linecap="round"/><g fill="#a9a9a9"><path d="M962,790 L972,785 L972.6,788 L966.5,791 L972.6,794 L972,797 Z"/><rect x="975" y="784.8" width="10.4" height="2.8"/><rect x="975" y="791" width="10.4" height="2.8"/></g><path d="M745.3,746.7 C1038.1,746.7 1090.9,986.6 1383.7,986.6" stroke="#1fd8a8" stroke-width="1.8" fill="none" stroke-linecap="round"/><g filter="url(#nshadow)"><rect x="1366.3" y="776.3" width="262.6" height="225.0" rx="6" fill="#0c0c0c"/></g><rect x="1367.8" y="777.8" width="259.6" height="222.0" rx="4.5" fill="#1e201f" fill-opacity="0.9"/><g clip-path="url(#hc82_1366)"><rect x="1366.3" y="776.3" width="262.6" height="56.5" fill="url(#hgB82_1366)"/><rect x="1366.3" y="776.3" width="262.6" height="56.5" fill="url(#hgT82_1366)" mask="url(#hm82_1366m)"/><rect x="1366.3" y="776.3" width="262.6" height="56.5" fill="url(#hdrBandB)"/><rect x="1366.3" y="778.3" width="262.6" height="1.3" fill="#fff" fill-opacity="0.42"/></g><path d="M1384.4,782.3 L1391.3,789 L1384.4,795.7 L1377.5,789 Z" fill="none" stroke="#fff" stroke-width="2.6" stroke-linejoin="round"/><rect x="1375.8" y="787.4" width="3.6" height="3.2" fill="#4e7fa6"/><text x="1396.6" y="793.0" font-size="12.5" font-weight="bold" font-style="normal" fill="#fff" textLength="160.2" lengthAdjust="spacingAndGlyphs" >Multicast Spawn Death Bag</text><text x="1398.4" y="812.5" font-size="12" font-weight="normal" font-style="italic" fill="#a8ad8b" textLength="162.0" lengthAdjust="spacingAndGlyphs" >Target is BP Master Build Part</text><text x="1397.5" y="826.5" font-size="12" font-weight="normal" font-style="italic" fill="#a8ad8b" textLength="202.0" lengthAdjust="spacingAndGlyphs" >RELIABLE Replicated To All (if server)</text><path d="M1378.9,842.9 H1384.1 L1390.9,849.9 L1384.1,856.9 H1378.9 Q1377.9,856.9 1377.9,855.9 V843.9 Q1377.9,842.9 1378.9,842.9 Z" fill="#fff"/><path d="M1606.0,842.9 H1610.8 L1617.0,849.9 L1610.8,856.9 H1606.0 Q1605.0,856.9 1605.0,855.9 V843.9 Q1605.0,842.9 1606.0,842.9 Z" fill="#fff"/><circle cx="1384.1" cy="879.1" r="5.0" fill="#161616" stroke="#0aa6ee" stroke-width="2"/><path d="M1390.5,876.4 L1394.3,879.1 L1390.5,881.8 Z" fill="#0aa6ee"/><text x="1399.1" y="880.6" font-size="12.5" font-weight="normal" font-style="normal" fill="#fff" textLength="35.3" lengthAdjust="spacingAndGlyphs" >Target</text><rect x="1439.6" y="870.6" width="27.8" height="17.4" rx="2" fill="none" stroke="#cfcfcf" stroke-width="1.2"/><text x="1444.3" y="882.5" font-size="12" font-weight="normal" font-style="normal" fill="#e6e6e6" textLength="18.8" lengthAdjust="spacingAndGlyphs" >self</text><rect x="1377.90" y="902.10" width="3.42" height="3.08" fill="#0758d6"/><rect x="1377.90" y="905.77" width="3.42" height="3.08" fill="#0758d6"/><rect x="1377.90" y="909.43" width="3.42" height="3.08" fill="#0758d6"/><rect x="1381.97" y="902.10" width="3.42" height="3.08" fill="#0758d6"/><rect x="1381.97" y="905.77" width="3.42" height="3.08" fill="#0758d6"/><rect x="1381.97" y="909.43" width="3.42" height="3.08" fill="#0758d6"/><rect x="1386.03" y="902.10" width="3.42" height="3.08" fill="#0758d6"/><rect x="1386.03" y="905.77" width="3.42" height="3.08" fill="#0758d6"/><rect x="1386.03" y="909.43" width="3.42" height="3.08" fill="#0758d6"/><text x="1395.5" y="912.0" font-size="12.5" font-weight="normal" font-style="normal" fill="#fff" textLength="50.0" lengthAdjust="spacingAndGlyphs" >Inventory</text><rect x="1377.90" y="928.60" width="3.42" height="3.08" fill="#0758d6"/><rect x="1377.90" y="932.27" width="3.42" height="3.08" fill="#0758d6"/><rect x="1377.90" y="935.93" width="3.42" height="3.08" fill="#0758d6"/><rect x="1381.97" y="928.60" width="3.42" height="3.08" fill="#0758d6"/><rect x="1381.97" y="932.27" width="3.42" height="3.08" fill="#0758d6"/><rect x="1381.97" y="935.93" width="3.42" height="3.08" fill="#0758d6"/><rect x="1386.03" y="928.60" width="3.42" height="3.08" fill="#0758d6"/><rect x="1386.03" y="932.27" width="3.42" height="3.08" fill="#0758d6"/><rect x="1386.03" y="935.93" width="3.42" height="3.08" fill="#0758d6"/><text x="1395.2" y="937.8" font-size="12.5" font-weight="normal" font-style="normal" fill="#fff" textLength="97.2" lengthAdjust="spacingAndGlyphs" >Weapon Inventory</text><circle cx="1383.7" cy="960.5" r="5.8" fill="#8edb2c"/><path d="M1389.9,957.8 L1393.7,960.5 L1389.9,963.2 Z" fill="#8edb2c"/><text x="1399.1" y="963.9" font-size="12.5" font-weight="normal" font-style="normal" fill="#fff" textLength="37.8" lengthAdjust="spacingAndGlyphs" >Weight</text><circle cx="1383.7" cy="986.6" r="5.8" fill="#1fd8a8"/><path d="M1389.9,983.9 L1393.7,986.6 L1389.9,989.3 Z" fill="#1fd8a8"/><text x="1399.6" y="989.4" font-size="12.5" font-weight="normal" font-style="normal" fill="#fff" textLength="27.0" lengthAdjust="spacingAndGlyphs" >Slots</text><g filter="url(#nshadow)"><rect x="167.2" y="824.5" width="232.6" height="34.0" rx="17.0" fill="#0c0c0c"/></g><rect x="168.6" y="825.9" width="229.8" height="31.2" rx="15.6" fill="url(#pillBase)"/><g mask="url(#pg102_167m)"><rect x="169.2" y="826.5" width="228.6" height="25.8" fill="url(#pg102_167v)"/></g><path d="M169.4,841.5 A15.0,15.0 0 0 1 184.2,826.7 H382.8 A15.0,15.0 0 0 1 397.6,841.5" stroke="#d0d0d0" stroke-opacity="0.55" stroke-width="1.1" fill="none"/><text x="185.3" y="846.2" font-size="12.5" font-weight="normal" font-style="normal" fill="#fff" textLength="179.8" lengthAdjust="spacingAndGlyphs" >BP Convert Inventory Component</text><circle cx="376.6" cy="841.6" r="5.6" fill="#0aa6ee"/><path d="M382.6,838.9 L386.4,841.6 L382.6,844.3 Z" fill="#0aa6ee"/><g filter="url(#nshadow)"><rect x="556.3" y="824.0" width="182.2" height="34.4" rx="17.2" fill="#0c0c0c"/></g><rect x="557.7" y="825.4" width="179.4" height="31.6" rx="15.8" fill="url(#pillBase)"/><g mask="url(#pg105_556m)"><rect x="558.3" y="826.0" width="178.2" height="26.1" fill="url(#pg105_556v)"/></g><path d="M558.5,841.2 A15.2,15.2 0 0 1 573.5,826.2 H721.3 A15.2,15.2 0 0 1 736.3,841.2" stroke="#d0d0d0" stroke-opacity="0.55" stroke-width="1.1" fill="none"/><circle cx="576.0" cy="841.5" r="5.6" fill="#0aa6ee"/><path d="M582.0,838.8 L585.8,841.5 L582.0,844.2 Z" fill="#0aa6ee"/><text x="591.9" y="846.1" font-size="12.5" font-weight="normal" font-style="normal" fill="#fff" textLength="34.6" lengthAdjust="spacingAndGlyphs" >Target</text><text x="659.5" y="846.1" font-size="12.5" font-weight="normal" font-style="normal" fill="#fff" textLength="49.8" lengthAdjust="spacingAndGlyphs" >Inventory</text><rect x="713.80" y="836.20" width="3.22" height="3.08" fill="#0758d6"/><rect x="713.80" y="839.87" width="3.22" height="3.08" fill="#0758d6"/><rect x="713.80" y="843.53" width="3.22" height="3.08" fill="#0758d6"/><rect x="717.63" y="836.20" width="3.22" height="3.08" fill="#0758d6"/><rect x="717.63" y="839.87" width="3.22" height="3.08" fill="#0758d6"/><rect x="717.63" y="843.53" width="3.22" height="3.08" fill="#0758d6"/><rect x="721.47" y="836.20" width="3.22" height="3.08" fill="#0758d6"/><rect x="721.47" y="839.87" width="3.22" height="3.08" fill="#0758d6"/><rect x="721.47" y="843.53" width="3.22" height="3.08" fill="#0758d6"/><g filter="url(#nshadow)"><rect x="540.6" y="873.5" width="228.7" height="33.0" rx="16.5" fill="#0c0c0c"/></g><rect x="542.0" y="874.9" width="225.9" height="30.2" rx="15.1" fill="url(#pillBase)"/><g mask="url(#pg110_540m)"><rect x="542.6" y="875.5" width="224.7" height="25.1" fill="url(#pg110_540v)"/></g><path d="M542.8,890.0 A14.5,14.5 0 0 1 557.1,875.7 H752.8 A14.5,14.5 0 0 1 767.1,890.0" stroke="#d0d0d0" stroke-opacity="0.55" stroke-width="1.1" fill="none"/><circle cx="559.9" cy="890.4" r="5.6" fill="#0aa6ee"/><path d="M565.9,887.7 L569.7,890.4 L565.9,893.1 Z" fill="#0aa6ee"/><text x="575.0" y="894.9" font-size="12.5" font-weight="normal" font-style="normal" fill="#fff" textLength="34.6" lengthAdjust="spacingAndGlyphs" >Target</text><text x="643.2" y="894.9" font-size="12.5" font-weight="normal" font-style="normal" fill="#fff" textLength="97.0" lengthAdjust="spacingAndGlyphs" >Weapon Inventory</text><rect x="745.10" y="884.80" width="3.08" height="3.08" fill="#0758d6"/><rect x="745.10" y="888.47" width="3.08" height="3.08" fill="#0758d6"/><rect x="745.10" y="892.13" width="3.08" height="3.08" fill="#0758d6"/><rect x="748.77" y="884.80" width="3.08" height="3.08" fill="#0758d6"/><rect x="748.77" y="888.47" width="3.08" height="3.08" fill="#0758d6"/><rect x="748.77" y="892.13" width="3.08" height="3.08" fill="#0758d6"/><rect x="752.43" y="884.80" width="3.08" height="3.08" fill="#0758d6"/><rect x="752.43" y="888.47" width="3.08" height="3.08" fill="#0758d6"/><rect x="752.43" y="892.13" width="3.08" height="3.08" fill="#0758d6"/><g filter="url(#nshadow)"><rect x="556.3" y="923.0" width="174.3" height="32.3" rx="16.1" fill="#0c0c0c"/></g><rect x="557.7" y="924.4" width="171.5" height="29.5" rx="14.7" fill="url(#pillBase)"/><g mask="url(#pg115_556m)"><rect x="558.3" y="925.0" width="170.3" height="24.5" fill="url(#pg115_556v)"/></g><path d="M558.5,939.1 A14.1,14.1 0 0 1 572.4,925.2 H714.5 A14.1,14.1 0 0 1 728.4,939.1" stroke="#d0d0d0" stroke-opacity="0.55" stroke-width="1.1" fill="none"/><circle cx="576.0" cy="938.4" r="5.6" fill="#0aa6ee"/><path d="M582.0,935.7 L585.8,938.4 L582.0,941.1 Z" fill="#0aa6ee"/><text x="591.9" y="943.0" font-size="12.5" font-weight="normal" font-style="normal" fill="#fff" textLength="34.6" lengthAdjust="spacingAndGlyphs" >Target</text><text x="659.5" y="943.0" font-size="12.5" font-weight="normal" font-style="normal" fill="#fff" textLength="36.8" lengthAdjust="spacingAndGlyphs" >Weight</text><circle cx="706.5" cy="938.4" r="5.8" fill="#8edb2c"/><path d="M712.7,935.7 L716.5,938.4 L712.7,941.1 Z" fill="#8edb2c"/><g filter="url(#nshadow)"><path fill-rule="evenodd" d="M1373.1,546.1 H1402 Q1412,546.1 1412,556.1 V566 Q1412,576 1402,576 H1373.1 Q1363.1,576 1363.1,566 V556.1 Q1363.1,546.1 1373.1,546.1 Z M1372.8,553.1 Q1369.8,553.1 1369.8,556.1 V565.9 Q1369.8,568.9 1372.8,568.9 H1401.9 Q1404.9,568.9 1404.9,565.9 V556.1 Q1404.9,553.1 1401.9,553.1 Z" fill="url(#selK)"/></g><path d="M1369.8,556.9 L1404.9,556.9" stroke="#f2f2f2" stroke-width="2.7" fill="none"/><circle cx="1385.6" cy="556.7" r="5.6" fill="#f6f6f6"/><path d="M1390.8,553.5 L1394,556.8 L1390.8,560 Z" fill="#ddd"/><circle cx="2437.6" cy="556.5" r="6" fill="#f6f6f6"/><path d="M2443,553.3 L2446.5,556.6 L2443,559.9 Z" fill="#ddd"/><circle cx="2146.8" cy="1058.7" r="6" fill="#f6f6f6"/><path d="M2152.3,1055.4 L2155.8,1058.7 L2152.3,1062 Z" fill="#ddd"/><g filter="url(#nshadow)"><rect x="2371.3" y="662.5" width="131.8" height="34.1" rx="17.1" fill="#0c0c0c"/></g><rect x="2372.7" y="663.9" width="129.0" height="31.3" rx="15.7" fill="url(#pillBase)"/><g mask="url(#pg126_2371m)"><rect x="2373.3" y="664.5" width="127.8" height="25.9" fill="url(#pg126_2371v)"/></g><path d="M2373.5,679.5 A15.1,15.1 0 0 1 2388.4,664.7 H2486.0 A15.1,15.1 0 0 1 2500.9,679.5" stroke="#d0d0d0" stroke-opacity="0.55" stroke-width="1.1" fill="none"/><text x="2392.4" y="684.1" font-size="12.5" font-weight="normal" font-style="normal" fill="#fff" textLength="77.8" lengthAdjust="spacingAndGlyphs" >Build Part Info</text><circle cx="2480.3" cy="679.5" r="5.6" fill="#0052d4"/><path d="M2486.3,676.8 L2490.1,679.5 L2486.3,682.2 Z" fill="#0052d4"/><circle cx="2501.6" cy="654.8" r="5.6" fill="url(#sph)"/><circle cx="2508" cy="660.8" r="5.6" fill="url(#sph)"/><g filter="url(#nshadow)"><rect x="2516.0" y="662.1" width="283.5" height="127.1" rx="6" fill="#0c0c0c"/></g><rect x="2517.5" y="663.6" width="280.5" height="124.1" rx="4.5" fill="#1e201f" fill-opacity="0.9"/><g clip-path="url(#hc130_2516)"><rect x="2516.0" y="662.1" width="283.5" height="24.4" fill="url(#hgB130_2516)"/><rect x="2516.0" y="662.1" width="283.5" height="24.4" fill="url(#hgT130_2516)" mask="url(#hm130_2516m)"/><rect x="2516.0" y="662.1" width="283.5" height="24.4" fill="url(#hdrBand)"/><rect x="2516.0" y="664.1" width="283.5" height="1.3" fill="#fff" fill-opacity="0.42"/></g><rect x="2528" y="675.5" width="9" height="4" rx="1.5" fill="#6aa0ff"/><path d="M2536,677.5 L2541,671.5 M2536,677.5 L2541,683.5" stroke="#fff" stroke-width="1.8" fill="none"/><path d="M2539.5,669.5 L2543,670 L2541.5,673.5 Z M2539.5,685.5 L2543,685 L2541.5,681.5 Z" fill="#fff"/><text x="2547.3" y="678.6" font-size="12.5" font-weight="bold" font-style="normal" fill="#fff" textLength="127.5" lengthAdjust="spacingAndGlyphs" >Break S_BuildPartInfo</text><path d="M2480.3,679.5 C2506.0,679.5 2508.7,702.4 2534.4,702.4" stroke="#0052d4" stroke-width="1.8" fill="none" stroke-linecap="round"/><circle cx="2534.4" cy="702.4" r="5.6" fill="#0052d4"/><path d="M2540.4,699.7 L2544.2,702.4 L2540.4,705.1 Z" fill="#0052d4"/><circle cx="2480.3" cy="679.5" r="5.6" fill="#0052d4"/><path d="M2486.3,676.8 L2490.1,679.5 L2486.3,682.2 Z" fill="#0052d4"/><text x="2549.2" y="706.9" font-size="12.5" font-weight="normal" font-style="normal" fill="#fff" textLength="88.0" lengthAdjust="spacingAndGlyphs" >S Build Part Info</text><text x="2671.4" y="707.1" font-size="12.5" font-weight="normal" font-style="normal" fill="#fff" textLength="95.4" lengthAdjust="spacingAndGlyphs" >Destructible Mesh</text><circle cx="2778.0" cy="702.3" r="5.6" fill="#0aa6ee"/><path d="M2784.0,699.6 L2787.8,702.3 L2784.0,705.0 Z" fill="#0aa6ee"/><text x="2661.2" y="732.9" font-size="12.5" font-weight="normal" font-style="normal" fill="#fff" textLength="106.3" lengthAdjust="spacingAndGlyphs" >Require Name Input</text><circle cx="2778.0" cy="728.8" r="4.6" fill="#161616" stroke="#7c0808" stroke-width="2"/><path d="M2784.0,726.1 L2787.8,728.8 L2784.0,731.5 Z" fill="#7c0808"/><text x="2687.0" y="759.0" font-size="12.5" font-weight="normal" font-style="normal" fill="#fff" textLength="84.0" lengthAdjust="spacingAndGlyphs" >Collision Ignore</text><rect x="2776.40" y="749.80" width="2.30" height="2.30" fill="#169a7e"/><rect x="2776.40" y="753.63" width="2.30" height="2.30" fill="#169a7e"/><rect x="2776.40" y="757.47" width="2.30" height="2.30" fill="#169a7e"/><rect x="2780.23" y="749.80" width="2.30" height="2.30" fill="#169a7e"/><rect x="2780.23" y="753.63" width="2.30" height="2.30" fill="#169a7e"/><rect x="2780.23" y="757.47" width="2.30" height="2.30" fill="#169a7e"/><rect x="2784.07" y="749.80" width="2.30" height="2.30" fill="#169a7e"/><rect x="2784.07" y="753.63" width="2.30" height="2.30" fill="#169a7e"/><rect x="2784.07" y="757.47" width="2.30" height="2.30" fill="#169a7e"/><path d="M2652.3,773.4 H2663.9 L2658.1,781.8 Z" fill="#cfcfcf"/><g filter="url(#nshadow)"><rect x="2824.6" y="517.4" width="217.3" height="86.4" rx="6" fill="#0c0c0c"/></g><rect x="2826.1" y="518.9" width="214.3" height="83.4" rx="4.5" fill="#1e201f" fill-opacity="0.9"/><g clip-path="url(#hc144_2824)"><rect x="2824.6" y="517.4" width="217.3" height="23.6" fill="url(#hgB144_2824)"/><rect x="2824.6" y="517.4" width="217.3" height="23.6" fill="url(#hgT144_2824)" mask="url(#hm144_2824m)"/><rect x="2824.6" y="517.4" width="217.3" height="23.6" fill="url(#hdrBand)"/><rect x="2824.6" y="519.4" width="217.3" height="1.3" fill="#fff" fill-opacity="0.42"/></g><text x="2837.5" y="535.5" font-size="15" font-weight="bold" font-style="normal" fill="#f0f0f0" textLength="9.5" lengthAdjust="spacingAndGlyphs" >?</text><text x="2855.5" y="534.5" font-size="12.5" font-weight="bold" font-style="normal" fill="#fff" textLength="39.0" lengthAdjust="spacingAndGlyphs" >IsValid</text><path d="M2837.0,550.9 H2842.0 L2848.5,557.9 L2842.0,564.9 H2837.0 Q2836.0,564.9 2836.0,563.9 V551.9 Q2836.0,550.9 2837.0,550.9 Z" fill="#fff"/><text x="2854.3" y="562.3" font-size="12.5" font-weight="normal" font-style="normal" fill="#fff" textLength="25.3" lengthAdjust="spacingAndGlyphs" >Exec</text><text x="2973.1" y="562.3" font-size="12.5" font-weight="normal" font-style="normal" fill="#fff" textLength="39.8" lengthAdjust="spacingAndGlyphs" >Is Valid</text><path d="M3019.0,550.9 H3023.7 L3029.8,557.9 L3023.7,564.9 H3019.0 Q3018.0,564.9 3018.0,563.9 V551.9 Q3018.0,550.9 3019.0,550.9 Z" fill="#fff"/><circle cx="2842.3" cy="585.0" r="5.6" fill="#0aa6ee"/><path d="M2848.3,582.3 L2852.1,585.0 L2848.3,587.7 Z" fill="#0aa6ee"/><text x="2857.2" y="589.3" font-size="12.5" font-weight="normal" font-style="normal" fill="#fff" textLength="65.3" lengthAdjust="spacingAndGlyphs" >Input Object</text><text x="2951.4" y="590.5" font-size="12.5" font-weight="normal" font-style="normal" fill="#fff" textLength="61.6" lengthAdjust="spacingAndGlyphs" >Is Not Valid</text><path d="M3019.0,579.2 H3023.7 L3029.8,586.2 L3023.7,593.2 H3019.0 Q3018.0,593.2 3018.0,592.2 V580.2 Q3018.0,579.2 3019.0,579.2 Z" fill="#fff"/><rect x="0" y="127" width="110" height="1166" fill="url(#vigL)"/><rect x="0" y="1293" width="110" height="197" fill="url(#vigL)" opacity="0.6"/><rect x="2940" y="1293" width="147" height="197" fill="url(#vigR)" opacity="0.5"/><rect x="2940" y="127" width="147" height="1166" fill="url(#vigR)"/><path d="M17.5,28.5 L32.5,11.5 V21.5 H42.0 V35.5 H32.5 V45.5 Z" fill="url(#arrG)"/><path d="M105.0,28.5 L90.0,11.5 V21.5 H80.5 V35.5 H90.0 V45.5 Z" fill="#8d8d8d"/><g stroke="#4a5060" stroke-width="1"><path d="M1145.5,20.5 H1150 M1140,25.5 V29.5 M1155.5,26.5 V31 M1146,36 H1150"/></g><g fill="url(#icoG)"><rect x="1135" y="16" width="10.3" height="9.6"/><path d="M1150.1,16.4 L1161.8,17 V26.4 L1150.1,25.8 Z"/><rect x="1126" y="29.3" width="19.4" height="15.1"/><path d="M1149.8,30.9 L1161.8,31.5 V40.9 L1149.8,40.3 Z"/></g><text x="1181.9" y="40.2" font-size="28" font-weight="normal" font-style="normal" fill="#9d9d9d" textLength="297.5" lengthAdjust="spacingAndGlyphs" >BP_CampFireBuildPart</text><path d="M1490.5,19.5 L1502.5,31 L1490.5,42.5" stroke="#d8d8d8" stroke-width="2.6" fill="none"/><text x="1516.2" y="40.2" font-size="28" font-weight="normal" font-style="normal" fill="#9d9d9d" textLength="160.5" lengthAdjust="spacingAndGlyphs" >Event Graph</text><path d="M1713.5,19 L1725.5,30.5 L1713.5,42" stroke="#d8d8d8" stroke-width="2.6" fill="none"/><text x="1752.2" y="40.2" font-size="28" font-weight="normal" font-style="normal" fill="#9d9d9d" textLength="328.0" lengthAdjust="spacingAndGlyphs" >Multicast Destroy Events</text><text x="2977.5" y="36.8" font-size="31" font-weight="bold" font-style="normal" fill="#2c2c2c" textLength="104.5" lengthAdjust="spacingAndGlyphs" >Zoom -3</text><g opacity="0.185"><text x="2636.5" y="1458.1" font-size="98.5" font-weight="bold" font-style="normal" fill="#ffffff" textLength="437.0" lengthAdjust="spacingAndGlyphs" stroke="#fff" stroke-width="2.2">BLUEPRINT</text></g></svg></body></html>
